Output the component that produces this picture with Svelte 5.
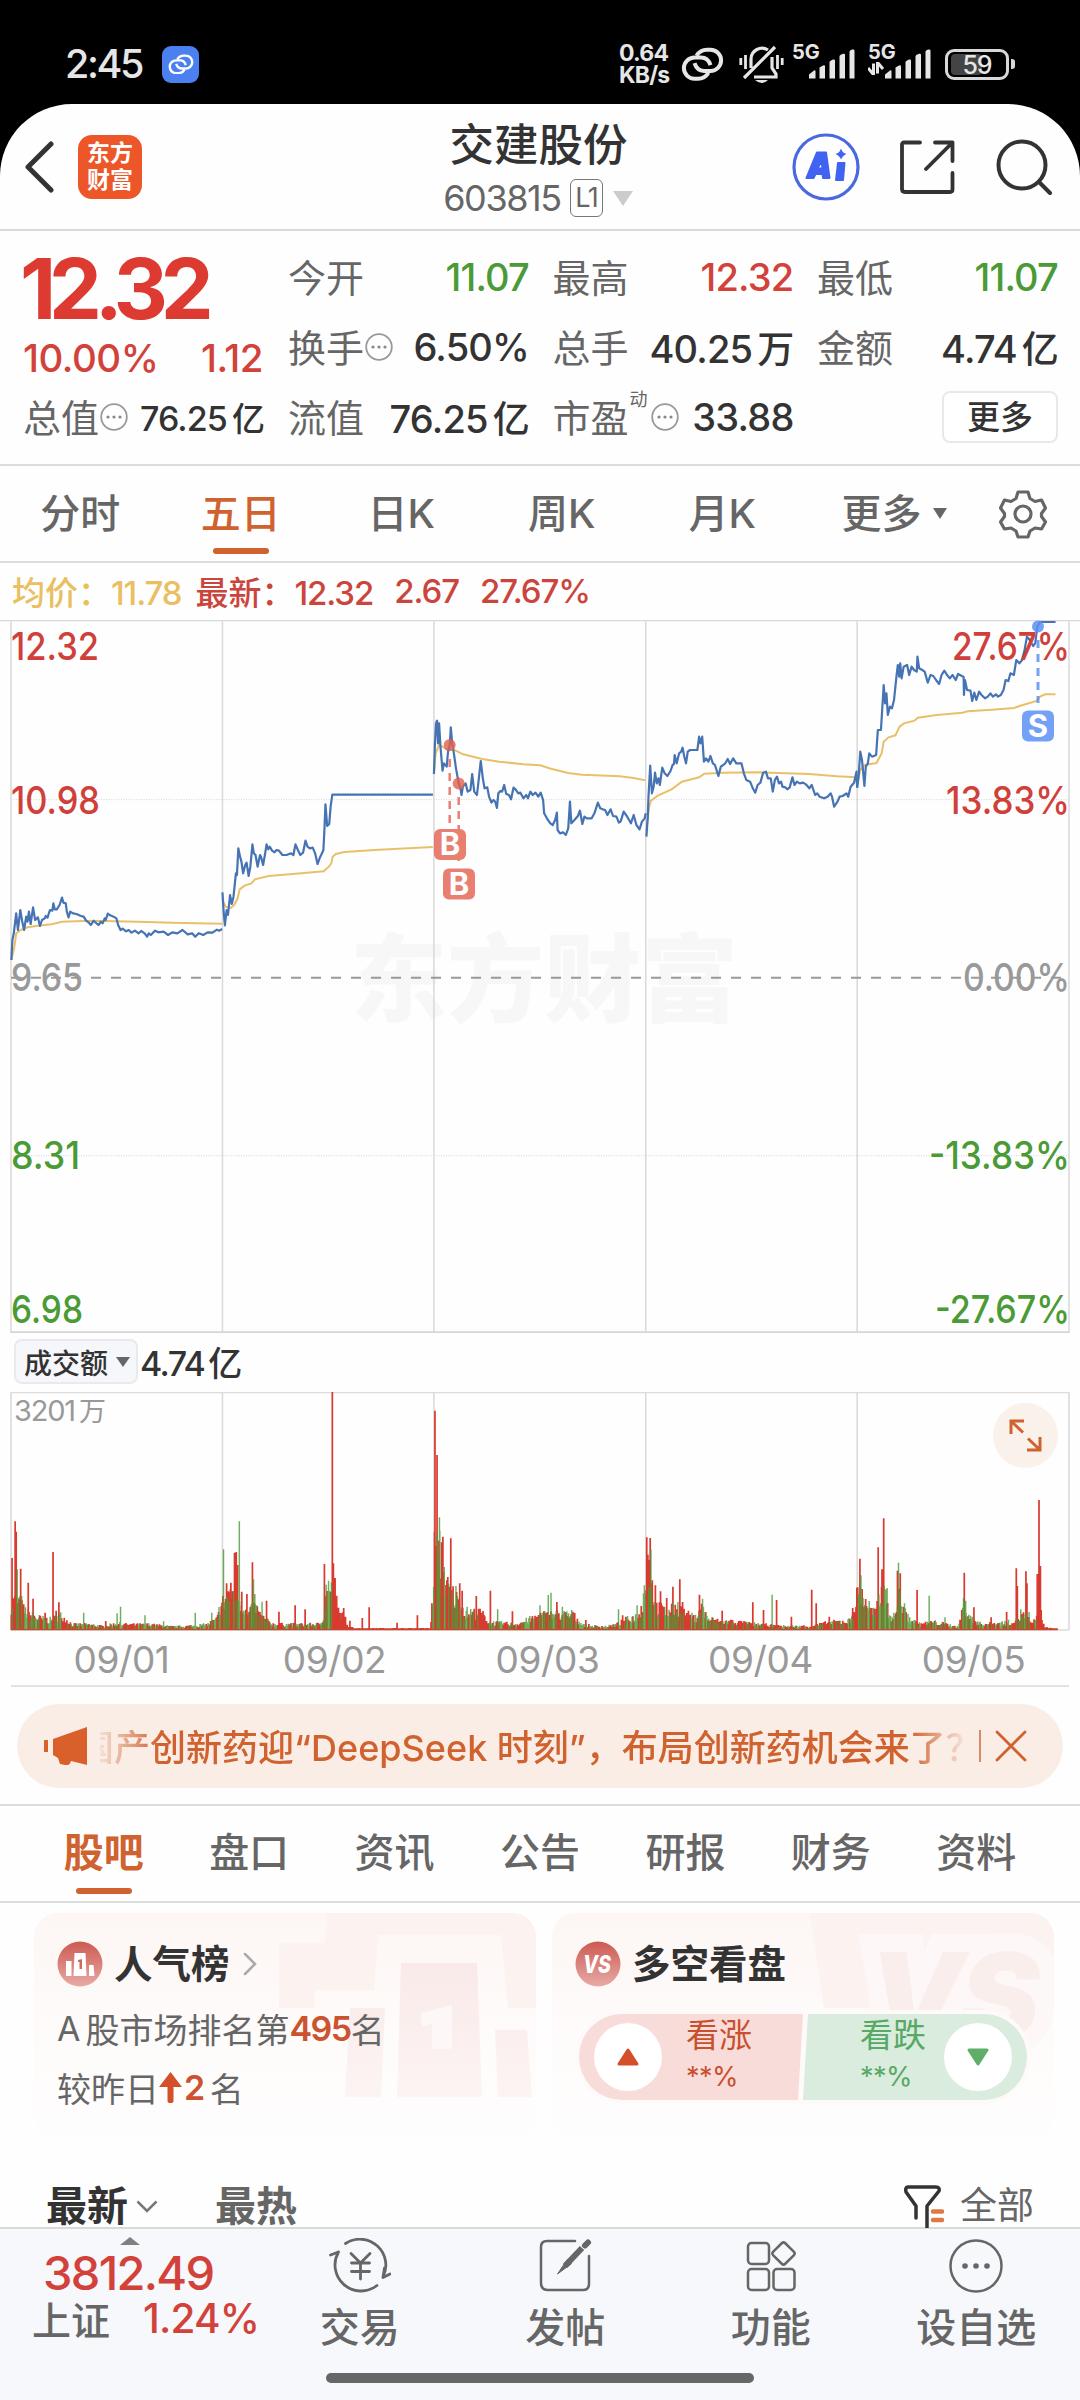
<script lang="ts">
	interface Quote {
		label: string;
		value: string;
		unit?: string;
		tone?: string;
		info?: boolean;
		sup?: string;
	}

	const quotes: Quote[] = [
		{ label: '今开', value: '11.07', tone: 'down' },
		{ label: '最高', value: '12.32', tone: 'up' },
		{ label: '最低', value: '11.07', tone: 'down' },
		{ label: '换手', value: '6.50%', info: true },
		{ label: '总手', value: '40.25', unit: '万' },
		{ label: '金额', value: '4.74', unit: '亿' },
		{ label: '流值', value: '76.25', unit: '亿' },
		{ label: '市盈', value: '33.88', info: true, sup: '动' }
	];

	const periods = ['分时', '五日', '日K', '周K', '月K'];
	const sections = ['股吧', '盘口', '资讯', '公告', '研报', '财务', '资料'];
	const dates = ['09/01', '09/02', '09/03', '09/04', '09/05'];

	// plot units: 3136 wide, day borders
	const days = [32, 646, 1260, 1875, 2489, 3104];

	const prices = [
		'33,1080 36,1020 40,1000 47,940 52,990 59,930 64,962 70,990 76,950 80,965 84,935 89,972 96,922 102,960 110,952 116,978 122,960 130,955 133,948 138,953 145,930 152,932 155,910 159,928 165,928 173,915 180,893 184,908 191,910 194,935 199,952 204,935 212,940 222,942 235,948 243,950 250,962 258,968 264,975 272,962 280,970 286,975 293,965 298,970 304,955 307,960 313,941 320,946 330,950 338,955 343,975 350,990 356,986 366,994 374,990 382,998 392,992 402,1000 410,993 420,1000 427,1010 432,1000 438,1005 450,992 460,997 475,995 488,1005 500,997 515,1000 530,990 545,1003 558,1000 567,1010 577,1000 590,1005 603,997 617,998 630,989 637,992 645,987',
		'646,877 649,930 653,976 658,930 662,945 668,885 673,912 678,890 682,850 685,820 688,825 692,745 697,770 701,785 706,820 712,795 716,788 722,828 727,800 733,733 737,760 742,765 748,800 755,765 758,770 764,795 770,760 774,733 779,748 783,740 790,752 797,757 803,750 810,752 820,765 832,765 845,760 852,765 858,733 865,750 872,765 880,758 887,722 893,740 900,745 908,743 915,760 922,792 928,775 935,760 939,750 942,690 945,613 950,678 956,672 960,620 965,584 1257,584',
		'1260,522 1263,430 1266,370 1269,362 1272,430 1275,370 1279,440 1285,512 1289,490 1297,500 1301,455 1306,435 1309,382 1313,430 1318,460 1324,505 1332,550 1338,570 1340,585 1344,560 1352,550 1358,575 1366,570 1371,522 1377,575 1385,585 1391,530 1396,483 1402,535 1407,565 1415,562 1420,590 1427,608 1433,600 1438,605 1443,624 1447,580 1453,573 1458,575 1464,555 1470,582 1478,585 1484,598 1491,563 1497,568 1505,580 1511,578 1520,595 1528,585 1533,595 1540,575 1547,585 1555,578 1563,590 1570,578 1577,600 1580,640 1588,655 1598,670 1605,675 1612,660 1617,638 1619,690 1626,700 1635,697 1643,705 1650,685 1655,605 1659,670 1668,660 1678,648 1684,632 1691,672 1697,650 1704,655 1718,655 1726,640 1736,608 1743,625 1750,628 1757,630 1764,645 1773,628 1780,648 1790,650 1797,668 1802,665 1811,635 1820,648 1832,670 1840,645 1848,675 1857,688 1864,665 1872,655 1875,640',
		'1877,710 1881,650 1883,590 1888,497 1893,580 1898,560 1902,518 1907,550 1912,535 1916,555 1923,503 1930,520 1938,528 1947,513 1953,495 1957,492 1959,465 1965,490 1972,460 1978,455 1982,443 1987,470 1992,490 1997,455 2004,450 2025,450 2030,410 2034,430 2039,410 2044,485 2050,475 2057,485 2063,468 2070,490 2076,495 2086,528 2093,500 2100,495 2106,490 2113,477 2120,492 2129,475 2138,490 2153,490 2160,520 2167,540 2178,545 2186,565 2193,578 2200,555 2208,548 2216,518 2224,515 2230,535 2238,535 2244,575 2250,540 2256,530 2262,550 2268,545 2272,560 2280,562 2286,568 2293,562 2301,532 2307,555 2314,545 2322,550 2332,548 2340,553 2350,565 2357,555 2367,585 2373,580 2380,590 2393,595 2403,590 2412,580 2416,590 2422,620 2432,605 2438,590 2447,588 2458,580 2463,590 2470,560 2480,548 2487,515 2489,563',
		'2489,563 2493,530 2498,455 2503,480 2510,558 2514,500 2520,490 2524,460 2532,470 2544,465 2549,390 2558,390 2561,340 2566,255 2570,310 2574,280 2578,345 2584,320 2590,325 2596,300 2603,230 2607,195 2611,230 2614,190 2618,235 2624,200 2634,195 2640,225 2647,200 2654,210 2662,215 2664,170 2669,205 2678,210 2685,215 2694,248 2702,225 2710,228 2718,240 2727,252 2734,225 2742,212 2750,225 2758,235 2766,225 2775,240 2782,222 2793,228 2798,230 2799,285 2802,240 2808,270 2818,272 2823,303 2829,278 2835,300 2843,275 2850,285 2860,295 2868,290 2876,280 2883,290 2892,283 2898,290 2906,285 2914,270 2920,240 2928,243 2934,220 2944,225 2951,180 2960,190 2968,180 2975,150 2982,110 2990,120 3000,138 3006,130 3012,80 3020,66 3065,66'
	];

	const averages = [
		'33,1080 42,1040 47,1000 60,990 80,982 110,977 150,973 180,965 240,963 300,963 400,965 500,968 645,971',
		'646,900 655,920 670,924 680,915 690,895 696,868 710,857 730,850 740,838 780,828 850,822 940,814 955,800 962,790 966,770 975,762 1000,756 1100,749 1257,741',
		'1260,520 1265,460 1275,435 1285,440 1300,450 1320,450 1345,463 1400,477 1450,485 1520,493 1568,496 1600,506 1650,519 1690,524 1800,529 1840,534 1873,541',
		'1877,690 1885,620 1890,602 1910,587 1950,568 1980,545 2030,532 2045,521 2100,518 2200,517 2350,522 2430,529 2487,532',
		'2490,550 2498,510 2510,495 2545,489 2560,460 2566,425 2580,412 2600,406 2612,380 2625,370 2655,362 2665,353 2720,345 2795,338 2810,334 2880,329 2945,324 2960,318 2980,312 3010,303 3020,290 3035,283 3065,283'
	];

	// turnover envelope: [x, height]
	const envelope = [
		[32, 100], [50, 120], [70, 75], [90, 55], [120, 42], [150, 38], [175, 55], [190, 42], [210, 20], [260, 20], [300, 14], [340, 24],
		[370, 20], [440, 20], [500, 12], [560, 16], [600, 20], [630, 40], [645, 100], [660, 130], [680, 150], [700, 110], [720, 60],
		[740, 90], [760, 50], [790, 22], [850, 20], [930, 22], [940, 60], [950, 140], [965, 150], [975, 120], [985, 60], [1000, 50],
		[1010, 18], [1030, 6], [1250, 6], [1256, 120], [1262, 300], [1280, 290], [1300, 160], [1330, 110], [1350, 70], [1400, 60],
		[1420, 28], [1500, 22], [1568, 55], [1620, 60], [1665, 55], [1690, 22], [1720, 14], [1760, 14], [1790, 20], [1820, 40],
		[1860, 55], [1870, 150], [1880, 260], [1893, 180], [1905, 90], [1940, 65], [1965, 95], [1990, 60], [2020, 45], [2035, 90],
		[2058, 42], [2090, 32], [2130, 32], [2168, 25], [2250, 16], [2290, 14], [2350, 14], [2410, 28], [2468, 35], [2483, 90],
		[2493, 160], [2510, 120], [2528, 80], [2543, 60], [2553, 120], [2568, 150], [2580, 60], [2598, 50], [2613, 140], [2630, 60],
		[2650, 34], [2670, 22], [2710, 30], [2748, 22], [2783, 10], [2798, 100], [2820, 42], [2850, 22], [2880, 24], [2920, 28],
		[2950, 34], [2970, 60], [2998, 25], [3008, 40], [3014, 150], [3023, 60], [3033, 10], [3068, 5], [3080, 0]
	];

	// turnover peaks: [x, height, r|g]
	const peaks: [number, number, string][] = [
		[35, 216, 'r'], [44, 326, 'r'], [47, 295, 'r'], [50, 182, 'g'], [60, 184, 'r'], [63, 102, 'g'], [82, 142, 'r'], [96, 94, 'r'],
		[131, 52, 'r'], [154, 234, 'r'], [163, 58, 'r'], [171, 83, 'r'], [243, 52, 'g'], [307, 27, 'r'], [340, 50, 'g'], [350, 70, 'g'],
		[421, 44, 'g'], [475, 26, 'g'], [567, 52, 'g'], [615, 52, 'g'], [636, 69, 'g'], [649, 242, 'g'], [658, 140, 'r'], [669, 122, 'r'],
		[681, 232, 'r'], [686, 234, 'r'], [690, 195, 'r'], [695, 326, 'g'], [702, 115, 'r'], [717, 108, 'r'], [733, 203, 'r'], [736, 152, 'g'],
		[740, 108, 'g'], [761, 85, 'g'], [774, 88, 'r'], [810, 55, 'r'], [857, 74, 'r'], [886, 62, 'r'], [942, 198, 'r'], [947, 136, 'g'],
		[954, 148, 'g'], [965, 714, 'r'], [968, 200, 'r'], [973, 156, 'r'], [998, 66, 'r'], [1016, 28, 'r'], [1052, 36, 'r'], [1072, 68, 'r'],
		[1153, 22, 'r'], [1212, 44, 'r'], [1263, 658, 'r'], [1269, 525, 'r'], [1276, 338, 'g'], [1286, 280, 'r'], [1309, 275, 'r'],
		[1324, 132, 'g'], [1335, 140, 'r'], [1342, 118, 'r'], [1383, 102, 'r'], [1394, 64, 'r'], [1424, 118, 'r'], [1445, 62, 'g'],
		[1488, 56, 'r'], [1568, 74, 'g'], [1592, 105, 'g'], [1600, 112, 'g'], [1617, 84, 'r'], [1633, 70, 'g'], [1660, 60, 'g'],
		[1701, 30, 'r'], [1796, 62, 'g'], [1808, 44, 'r'], [1850, 74, 'g'], [1862, 72, 'r'], [1878, 278, 'r'], [1884, 210, 'r'],
		[1888, 276, 'r'], [1890, 242, 'g'], [1903, 134, 'r'], [1918, 116, 'r'], [1936, 96, 'r'], [1954, 130, 'r'], [1974, 152, 'r'],
		[1982, 84, 'r'], [2031, 106, 'r'], [2040, 94, 'g'], [2097, 58, 'r'], [2186, 83, 'r'], [2217, 60, 'r'], [2242, 106, 'g'],
		[2255, 90, 'r'], [2298, 40, 'r'], [2357, 121, 'r'], [2370, 80, 'r'], [2408, 40, 'r'], [2476, 66, 'r'], [2497, 214, 'r'],
		[2500, 164, 'g'], [2550, 248, 'r'], [2561, 182, 'r'], [2566, 335, 'r'], [2572, 122, 'g'], [2576, 126, 'g'], [2606, 178, 'r'],
		[2609, 202, 'g'], [2614, 170, 'r'], [2663, 120, 'r'], [2698, 103, 'g'], [2744, 38, 'g'], [2800, 172, 'r'], [2804, 88, 'g'],
		[2828, 68, 'r'], [2878, 38, 'r'], [2923, 54, 'r'], [2951, 185, 'r'], [2954, 132, 'r'], [2964, 62, 'g'], [2979, 176, 'r'],
		[2982, 140, 'r'], [2988, 54, 'g'], [3012, 168, 'r'], [3017, 390, 'r'], [3021, 192, 'r']
	];

	function envelopeAt(x: number) {
		let i = 1;
		while (i < envelope.length - 1 && envelope[i][0] < x) i++;
		const [x0, h0] = envelope[i - 1];
		const [x1, h1] = envelope[i];
		return h0 + ((h1 - h0) * (x - x0)) / (x1 - x0);
	}

	function buildBars() {
		const paths: Record<string, string> = { r: '', g: '' };
		let seed = 7;
		for (let x = 33; x < 3070; x += 2.56) {
			seed = (seed * 16807) % 2147483647;
			const rnd = seed / 2147483647;
			seed = (seed * 16807) % 2147483647;
			const limitUp = x > 965 && x < 1256;
			const color = limitUp || x > 3010 || seed / 2147483647 > 0.45 ? 'r' : 'g';
			const h = Math.max(5, envelopeAt(x) * (0.45 + 0.6 * rnd));
			paths[color] += `M${x.toFixed(1)} 930v${-h.toFixed(0)}`;
		}
		for (const [x, h, color] of peaks) {
			paths[color] += `M${x} 930v${-h}`;
		}
		return paths;
	}

	const bars = buildBars();

	const axis = [
		{ y: 40, left: '12.32', right: '27.67%', lw: 88, rw: 118, tone: 'up' },
		{ y: 194, left: '10.98', right: '13.83%', lw: 89, rw: 124, tone: 'up' },
		{ y: 371, left: '9.65', right: '0.00%', lw: 72, rw: 107, tone: 'flat' },
		{ y: 549, left: '8.31', right: '-13.83%', lw: 69, rw: 141, tone: 'down' },
		{ y: 703, left: '6.98', right: '-27.67%', lw: 72, rw: 135, tone: 'down' }
	];
</script>

{#snippet info()}
	<svg class="info" width="28" height="28" viewBox="0 0 28 28">
		<circle cx="14" cy="14" r="12.8" fill="none" stroke="#999" stroke-width="1.8" />
		<g fill="#888"><circle cx="8" cy="14" r="1.6" /><circle cx="14" cy="14" r="1.6" /><circle cx="20" cy="14" r="1.6" /></g>
	</svg>
{/snippet}

{#snippet link(color: string, size: number)}
	<svg width={size} height={size * 0.8} viewBox="0 0 43 34" fill="none" stroke={color} stroke-width="4">
		<path d="M15.500 8.500C18 4.500 21 2.500 26 2.500H29.500A10.600 10.600 0 0 1 29.500 23.700H23Q16 23.700 13.500 16" />
		<path d="M27.500 25.500C25 29.500 22 31.500 17 31.500H13.500A10.600 10.600 0 0 1 13.500 10.300H20Q27 10.300 29.500 18" />
	</svg>
{/snippet}

{#snippet signal()}
	<svg width="46" height="30" viewBox="0 0 46 30" fill="#e6e6e6">
		<path d="M0 29.5v-4l5-4q1.500-1 1.500 1v7zM10.500 29.500V18.500l3.500-2q2-1 2 1v12zM20.500 29.500V13q0-1 3.500-2.500q2-.5 2 1v18zM30.500 29.500V7q0-1 3.500-2.200q2-.5 2 1v23.700zM40.500 29.500V2.500q0-1 2.500-2q2.500-.5 2.500 1v28z" />
	</svg>
{/snippet}

<div class="phone">
	<div class="status">
		<span class="clock">2:45</span>
		<span class="link-badge">{@render link('#fff', 26)}</span>
		<div class="status-right">
			<span class="speed">0.64<br />KB/s</span>
			{@render link('#e6e6e6', 43)}
			<svg class="bell" width="45" height="39" viewBox="0 0 45 39" fill="none" stroke="#e6e6e6" stroke-width="3.200">
				<path d="M12 23V14a11 11 0 0 1 17-9M33 12v11l4 6v3H15M5 33L36 2" />
				<path d="M1.800 13v7M6.500 10v14M38.500 10v14M43.200 13v7" stroke-width="2.800" />
				<path d="M16 35h13q-6 6-13 0z" fill="#e6e6e6" stroke="none" />
			</svg>
			<span class="net">5G</span>
			{@render signal()}
			<span class="net second">5G<svg width="17" height="13" viewBox="0 0 17 13"><path d="M5.500 13V1.500M0 6l5 6M9.500 0v11.500M10 1l5 6" stroke="#e6e6e6" stroke-width="3" fill="none" /></svg></span>
			{@render signal()}
			<div class="battery"><i></i><span>59</span></div>
		</div>
	</div>

	<div class="sheet">
		<header class="header">
			<svg class="back" width="32" height="52" viewBox="0 0 32 52"><path d="M27 3L4 26L27 49" fill="none" stroke="#333" stroke-width="5" stroke-linecap="round" stroke-linejoin="round" /></svg>
			<div class="logo">东方<br />财富</div>
			<div class="title">
				<h1>交建股份</h1>
				<div class="code">603815<span>L1</span><svg width="22" height="15" viewBox="0 0 22 15"><path d="M1 0h20L11 15z" fill="#ccc" /></svg></div>
			</div>
			<svg class="ai" width="68" height="68" viewBox="0 0 68 68">
				<circle cx="34" cy="34" r="32" fill="none" stroke="#4a68e0" stroke-width="3.200" />
				<g fill="#4163f2" stroke="#4163f2" stroke-width="2" stroke-linejoin="round">
					<path d="M25 19.500H34L37.500 45H31L30.500 41H23.500L21.500 45H14.500zM29.500 28L25.500 35.500H30.500z" fill-rule="evenodd" />
					<path d="M46 30H52.500L51 47H44z" />
				</g>
				<path d="M49 15.500q1.500 4.500 5.500 5.500q-4 1.500-5.500 5.500q-1.500-4-5.500-5.500q4-1 5.500-5.500z" fill="#4163f2" />
			</svg>
			<svg class="share" width="56" height="56" viewBox="0 0 56 56" fill="none" stroke="#333" stroke-width="3.800" stroke-linecap="round" stroke-linejoin="round">
				<path d="M21 3.500H5q-2 0-2 2V50q0 3 3 3H51q2.500 0 2.500-2.500V34M36 3.500H53.500V22M53.500 3.500L27 30" />
			</svg>
			<svg width="56" height="56" viewBox="0 0 56 56" fill="none" stroke="#333" stroke-width="4" stroke-linecap="round">
				<circle cx="26" cy="26" r="23.500" /><path d="M43 43L54 54" />
			</svg>
		</header>

		<section class="quote">
			<div class="main-quote">
				<div class="price">12.32</div>
				<div class="change"><span>10.00%</span><span>1.12</span></div>
				<div class="cell small"><span class="label">总值</span>{@render info()}<span class="value">76.25<em>亿</em></span></div>
			</div>
			<div class="grid">
				{#each quotes as q}
					<div class="cell">
						<span class="label">{q.label}</span>
						{#if q.sup}<sup>{q.sup}</sup>{/if}
						{#if q.info}{@render info()}{/if}
						<span class="value {q.tone ?? ''}">{q.value}{#if q.unit}<em>{q.unit}</em>{/if}</span>
					</div>
				{/each}
				<div class="cell"><button class="more">更多</button></div>
			</div>
		</section>

		<nav class="periods">
			{#each periods as p}
				<span class="period" class:active={p === '五日'}>{p}</span>
			{/each}
			<span class="period more-period">更多<svg width="14" height="11" viewBox="0 0 14 11"><path d="M0 0h14L7 11z" fill="#666" /></svg></span>
			<svg class="gear" width="48" height="50" viewBox="0 0 48 50" fill="none" stroke="#666" stroke-width="3.200" stroke-linejoin="round">
				<path d="M19 3h10l2 6.500l5 3l6.500-1.500l4 8l-4 5.500v3l4 5.500l-4 7l-6.500-1l-5 3l-2 6H19l-2-6l-5-3l-6.500 1l-4-7l4-5.500v-3l-4-5.500l4-8l6.500 1.500l5-3z" />
				<circle cx="24" cy="25" r="8" />
			</svg>
		</nav>

		<div class="legend">
			<span class="avg">均价：<b>11.78</b></span>
			<span>最新：<b>12.32</b></span>
			<b>2.67</b>
			<b>27.67%</b>
		</div>

		<svg class="price-chart" width="1080" height="713" viewBox="0 0 1080 713">
			<text class="watermark" x="350" y="394" textLength="388" lengthAdjust="spacingAndGlyphs">东方财富</text>
			<svg width="1080" height="713" viewBox="0 60 3136 2139" preserveAspectRatio="none">
				<g class="fixed" fill="none">
					{#each days as x}
						<path d="M{x} 64V2199" stroke="#d9d9d9" stroke-width="1.500" />
					{/each}
					<path d="M0 61.500H3136" stroke="#d8d8d8" stroke-width="1.500" />
					<path d="M32 2197H3104" stroke="#d5d5d5" stroke-width="2" />
					<path d="M32 599H3104M32 1667H3104" stroke="#d5d5d5" stroke-width="1" stroke-dasharray="1 1.500" />
					<path d="M32 1133H3104" stroke="#999" stroke-width="2" stroke-dasharray="10 10" />
					{#each averages as points}
						<polyline {points} stroke="#e9c06a" stroke-width="2" />
					{/each}
					{#each prices as points}
						<polyline {points} stroke="#4573b4" stroke-width="2.200" stroke-linejoin="round" />
					{/each}
				</g>
			</svg>
			{#each axis as a}
				<text class="axis {a.tone}" x="11" y={a.y} textLength={a.lw} lengthAdjust="spacingAndGlyphs">{a.left}</text>
				<text class="axis {a.tone}" x="1070" y={a.y} text-anchor="end" textLength={a.rw} lengthAdjust="spacingAndGlyphs">{a.right}</text>
			{/each}
			<g class="buy">
				<circle cx="449.700" cy="125" r="6" /><circle cx="458.700" cy="163.500" r="6" />
				<path d="M449.700 139V203M458.700 177V241" stroke-width="2.500" stroke-dasharray="8 6" />
				<rect x="434" y="209" width="32" height="31" rx="6" /><rect x="443" y="248.500" width="32" height="31" rx="6" />
			</g>
			<text class="tag" x="450" y="235">B</text>
			<text class="tag" x="459" y="274.500">B</text>
			<g class="sell">
				<circle cx="1038" cy="6.500" r="6" />
				<path d="M1038 20V83" stroke-width="3" stroke-dasharray="8 6" />
				<rect x="1022" y="90.500" width="32" height="31" rx="6" />
			</g>
			<text class="tag" x="1038" y="117">S</text>
		</svg>

		<div class="volume-head">
			<span class="chip">成交额<svg width="14" height="10" viewBox="0 0 14 10"><path d="M0 0h14L7 10z" fill="#666" /></svg></span>
			<span>4.74<em>亿</em></span>
		</div>

		<div class="volume">
			<svg width="1080" height="239" viewBox="0 216 3136 717" preserveAspectRatio="none">
				<g class="fixed" fill="none">
					{#each days as x}
						<path d="M{x} 217V930" stroke="#d9d9d9" stroke-width="1.500" />
					{/each}
					<path d="M32 217.500H3104M32 930H3104" stroke="#dcdcdc" stroke-width="1.500" />
				</g>
				<path d={bars.r} stroke="#d93a2f" stroke-width="5" />
				<path d={bars.g} stroke="#4a9a35" stroke-width="4.200" stroke-opacity=".8" />
				<path d="M32 929H3070" stroke="#c9452e" stroke-width="4" />
			</svg>
			<span class="volume-max">3201<em>万</em></span>
			<div class="expand">
				<svg width="33" height="33" viewBox="0 0 33 33" fill="none" stroke="#d0622f" stroke-width="3"><path d="M15 2H2V15M2.500 2.500L14 13.500M18 31H31V18M30.500 30.500L19 19.500" /></svg>
			</div>
		</div>

		<div class="dates">
			{#each dates as d}<span>{d}</span>{/each}
		</div>

		<div class="notice">
			<svg width="43" height="38" viewBox="0 0 43 38" fill="#d9602b"><path d="M0 13h4v12H0zM9 12L43 0V38L27 34q-1 5-6 4l-5-1l-2-6L9 28z" /></svg>
			<div class="ticker"><span>国产创新药迎“DeepSeek 时刻”，布局创新药机会来了？</span></div>
			<i></i>
			<svg width="32" height="32" viewBox="0 0 32 32"><path d="M2 2L30 30M30 2L2 30" stroke="#d0622f" stroke-width="2.800" stroke-linecap="round" /></svg>
		</div>

		<nav class="sections">
			{#each sections as s}
				<span class="section" class:active={s === '股吧'}>{s}</span>
			{/each}
		</nav>

		<div class="cards">
			<div class="card">
				<svg class="art" width="502" height="225" viewBox="0 0 502 225">
					<path d="M293 0H502V95H474L467 22H344L340 77H281V95H245V30H291z" fill="#fcf2f0" />
					<g fill="url(#podium)">
						<path d="M367 50H443L448 184H363zM316 95H351L347 184H311zM461 117H493L498 184H464z" />
						<path d="M387 100L418 92V136H398V111L388 113z" fill="#fdf8f7" />
					</g>
				</svg>
				<div class="card-title">
					<svg width="46" height="46" viewBox="0 0 46 46">
						<defs>
							<linearGradient id="badge" x2="0" y2="1"><stop stop-color="#cc5a52" /><stop offset="1" stop-color="#e8aaa6" /></linearGradient>
							<linearGradient id="podium" x2="0" y2="1"><stop stop-color="#f9eae9" /><stop offset="1" stop-color="#fcf4f3" /></linearGradient>
						</defs>
						<circle cx="23" cy="23" r="22.500" fill="url(#badge)" />
						<path d="M9 35V20h5.500V35zM16.500 35L17.500 12H28.500L29.500 35zM32 35V24H36.500L37.500 35z" fill="#fff" />
						<path d="M21 19l4-1V28H22.500V21H21z" fill="#cf6a63" />
					</svg>
					<h2>人气榜</h2>
					<svg class="chev" width="14" height="24" viewBox="0 0 14 24"><path d="M2 2L12 12L2 22" fill="none" stroke="#aaa" stroke-width="2.500" stroke-linecap="round" /></svg>
				</div>
				<p class="rank"><span class="a">A</span>股市场排名第<b>495</b>名</p>
				<p class="delta">较昨日<svg width="23" height="31" viewBox="0 0 23 31"><path d="M11.500 0L23 15H14.500V29q0 2-3 2t-3-2V15H0z" fill="#d3502b" /></svg><b>2</b>名</p>
			</div>
			<div class="card">
				<svg class="art" width="502" height="225" viewBox="0 0 502 225">
					<path d="M258 0H502V95H272z" fill="#fcf2f0" />
					<text x="316" y="126" class="vs-art outline">VS</text>
					<text x="316" y="126" class="vs-art">VS</text>
				</svg>
				<div class="card-title">
					<svg width="46" height="46" viewBox="0 0 46 46">
						<circle cx="23" cy="23" r="22.500" fill="url(#badge)" />
						<text x="22" y="32" text-anchor="middle" class="vs" textLength="28" lengthAdjust="spacingAndGlyphs">VS</text>
					</svg>
					<h2>多空看盘</h2>
				</div>
				<div class="vote">
					<div class="bull">
						<i><svg width="22" height="18" viewBox="0 0 22 18"><path d="M11 2L20 16H2z" fill="#d3502b" stroke="#d3502b" stroke-width="3" stroke-linejoin="round" /></svg></i>
						<span>看涨<small>**%</small></span>
					</div>
					<div class="bear">
						<span>看跌<small>**%</small></span>
						<i><svg width="22" height="18" viewBox="0 0 22 18"><path d="M11 16L20 2H2z" fill="#5fae6a" stroke="#5fae6a" stroke-width="3" stroke-linejoin="round" /></svg></i>
					</div>
				</div>
			</div>
		</div>

		<div class="sorting">
			<strong>最新</strong>
			<svg width="22" height="13" viewBox="0 0 22 13"><path d="M1.500 1.500L11 11L20.500 1.500" fill="none" stroke="#777" stroke-width="2.500" /></svg>
			<strong class="hot">最热</strong>
			<svg class="filter" width="40" height="43" viewBox="0 0 40 43" fill="none">
				<path d="M12 33V21L2 7Q1 2 4 2H32Q36 2 35 6L23 21V42" stroke="#333" stroke-width="3.500" stroke-linecap="round" stroke-linejoin="round" />
				<path d="M29 26.500H38M29 35H38" stroke="#e07a45" stroke-width="4.500" stroke-linecap="round" />
			</svg>
			<span>全部</span>
		</div>

		<footer class="bottom">
			<div class="index">
				<svg width="20" height="8" viewBox="0 0 20 8"><path d="M10 0L20 8H0z" fill="#808080" /></svg>
				<b class="points">3812.49</b>
				<div><span>上证</span><b>1.24%</b></div>
			</div>
			<div class="action">
				<svg width="62" height="56" viewBox="0 0 62 56" fill="none" stroke="#666" stroke-width="2.800" stroke-linecap="round">
					<path d="M16.500 5.500A26 26 0 0 1 54 39M54 39.500L61 36M48 47.500A26 26 0 0 1 9.500 14M9.500 14L1.500 17M54 39L55.500 30" />
					<path d="M22 15.500L31.500 25L41 15.500M22.500 25H40.500M22.500 33.500H40.500M31.500 25V41" />
				</svg>
				<span>交易</span>
			</div>
			<div class="action">
				<svg width="54" height="56" viewBox="0 0 54 56" fill="none" stroke="#666" stroke-width="2.500" stroke-linecap="round">
					<path d="M37 3H9Q3 3 3 9V45Q3 52 10 52H45Q51 52 51 46V18" />
					<path d="M44 10L27 28" stroke-width="6" stroke-linecap="butt" /><path d="M29 22L19.500 36L33 26z" fill="#666" stroke-width="1" />
					<path d="M47 7.500L50 4.500" stroke-width="6" />
				</svg>
				<span>发帖</span>
			</div>
			<div class="action">
				<svg width="50" height="56" viewBox="0 0 50 56" fill="none" stroke="#666" stroke-width="2.500">
					<rect x="2" y="5" width="21" height="21" rx="3.500" /><rect x="2" y="31" width="21" height="21" rx="3.500" /><rect x="27.500" y="31" width="21" height="21" rx="3.500" />
					<rect x="29" y="7" width="17" height="17" rx="2.500" transform="rotate(45 37.500 15.500)" />
				</svg>
				<span>功能</span>
			</div>
			<div class="action">
				<svg width="54" height="56" viewBox="0 0 54 56">
					<circle cx="27" cy="28" r="25.500" fill="none" stroke="#666" stroke-width="2.500" />
					<g fill="#666"><circle cx="16" cy="28" r="2.800" /><circle cx="27" cy="28" r="2.800" /><circle cx="38" cy="28" r="2.800" /></g>
				</svg>
				<span>设自选</span>
			</div>
			<div class="home-bar"></div>
		</footer>
	</div>
</div>

<style>
	:global(body) {
		background: #000;
	}

	.phone {
		width: 1080px;
		height: 2400px;
		overflow: hidden;
		background: #000;
		color: #333;
		font-family: Inter, 'Noto Sans CJK SC', sans-serif;
		font-weight: 500;
		white-space: nowrap;
	}

	.phone * {
		box-sizing: border-box;
	}

	svg {
		display: block;
		flex: none;
	}

	h1, h2, p {
		margin: 0;
	}

	em {
		margin-left: 5px;
		font-style: normal;
	}

	.up { color: #d2423a; fill: #d0403a; }
	.down { color: #4a9a35; fill: #4a9a35; }
	.flat { fill: #999; }

	.status {
		height: 104px;
		padding: 24px 71px 0 65px;
		display: flex;
		align-items: center;
		color: #e6e6e6;
	}

	.clock {
		width: 97px;
		font-size: 39.500px;
		letter-spacing: -2.4px;
	}

	.link-badge {
		width: 37px;
		height: 37px;
		border-radius: 9px;
		background: #4a80f0;
		display: flex;
		align-items: center;
		justify-content: center;
	}

	.status-right {
		margin-left: auto;
		display: flex;
		align-items: center;
	}

	.speed {
		width: 62px;
		font-size: 23px;
		font-weight: 700;
		line-height: 22px;
		letter-spacing: -0.8px;
	}

	.bell {
		margin: 0 8px 0 15px;
	}

	.net {
		align-self: flex-start;
		width: 30px;
		margin-right: -13px;
		font-size: 20px;
		font-weight: 700;
		line-height: 20px;
	}

	.net.second {
		margin-left: 13px;
		width: 28px;
		margin-right: -11px;
	}

	.battery {
		position: relative;
		width: 64px;
		height: 31px;
		margin-left: 14px;
		border: 3px solid #d8d8d8;
		border-radius: 9px;
		text-align: center;
		font-size: 25px;
		line-height: 26px;
		letter-spacing: -1px;
	}

	.battery i {
		position: absolute;
		left: 3px;
		top: 2px;
		width: 31px;
		height: 21px;
		border-radius: 4px;
		background: #444;
	}

	.battery span {
		position: relative;
	}

	.battery::after {
		content: '';
		position: absolute;
		right: -9px;
		top: 7px;
		width: 4px;
		height: 10px;
		border-radius: 0 3px 3px 0;
		background: #d8d8d8;
	}

	.sheet {
		height: 2296px;
		background: #fefefe;
		border-radius: 72px 72px 0 0;
		overflow: hidden;
	}

	.header {
		height: 127px;
		padding: 0 28px 0 24px;
		display: flex;
		align-items: center;
		border-bottom: 2px solid #d9d9d9;
	}

	.logo {
		width: 64px;
		height: 64px;
		margin-left: 22px;
		padding-top: 5px;
		border-radius: 14px;
		background: #ec5628;
		color: #fff;
		font-size: 23px;
		font-weight: 700;
		line-height: 27px;
		text-align: center;
	}

	.title {
		flex: 1;
		padding: 7px 0 0 251px;
		text-align: center;
	}

	.title h1 {
		font-size: 44.500px;
		font-weight: 500;
		line-height: 56px;
	}

	.code {
		display: flex;
		align-items: center;
		justify-content: center;
		font-size: 36px;
		font-weight: 400;
		line-height: 50px;
		letter-spacing: -1.4px;
		color: #666;
	}

	.code span {
		width: 33px;
		height: 38px;
		margin: 0 9px;
		border: 1.5px solid #777;
		border-radius: 6px;
		font-size: 27px;
		line-height: 35px;
	}

	.ai {
		margin-left: 108px;
	}

	.share {
		margin: 0 41px 0 39px;
	}

	.quote {
		height: 235px;
		padding: 11px 23px 0;
		display: flex;
		gap: 25px;
		border-bottom: 2px solid #dcdcdc;
	}

	.main-quote {
		width: 240px;
	}

	.price {
		height: 93px;
		margin-left: -3px;
		color: #dd3b31;
		font-size: 84px;
		font-weight: 700;
		line-height: 93px;
		letter-spacing: -7.2px;
	}

	.change {
		height: 47px;
		display: flex;
		justify-content: space-between;
		color: #d2423a;
		font-size: 38.500px;
		line-height: 47px;
		letter-spacing: -0.5px;
	}

	.grid {
		flex: 1;
		display: grid;
		grid-template-columns: repeat(3, 240px);
		grid-auto-rows: 70px;
		justify-content: space-between;
	}

	.cell {
		display: flex;
		align-items: center;
		height: 70px;
		font-size: 38px;
		letter-spacing: -0.8px;
	}

	.cell .label {
		padding-bottom: 4px;
		color: #666;
		font-size: 38px;
		font-weight: 400;
		letter-spacing: 0;
	}

	.cell .value {
		margin-left: auto;
		margin-right: -1px;
	}

	.cell em {
		font-size: 37px;
	}

	.cell.small {
		letter-spacing: -0.9px;
	}

	.cell.small .value {
		font-size: 34px;
	}

	.cell.small em {
		font-size: 33px;
	}

	.info {
		margin-left: 1px;
	}

	sup {
		width: 20px;
		margin: -38px 0 0 1px;
		font-size: 18px;
		font-weight: 400;
		color: #666;
		letter-spacing: 0;
	}

	.more {
		width: 116px;
		height: 52px;
		margin: 0 -1px 0 auto;
		padding: 0;
		border: 2px solid #e6e8ea;
		border-radius: 8px;
		background: #fff;
		color: #333;
		font: inherit;
		font-size: 33px;
		line-height: 46px;
	}

	.periods {
		height: 97px;
		display: flex;
		align-items: center;
		border-bottom: 2px solid #dcdcdc;
	}

	.period {
		position: relative;
		width: 160.500px;
		text-align: center;
		color: #666;
		font-size: 40px;
		line-height: 94px;
	}

	.period.active, .section.active {
		color: #d0622f;
	}

	.period.active::after, .section.active::after {
		content: '';
		position: absolute;
		left: calc(50% - 28px);
		bottom: 7px;
		width: 56px;
		height: 6px;
		border-radius: 3px;
		background: #d0622f;
	}

	.more-period {
		display: flex;
		align-items: center;
		justify-content: flex-end;
		gap: 11px;
		width: 144px;
	}

	.gear {
		margin-left: 52px;
	}

	.legend {
		height: 57px;
		padding: 0 0 2px 12px;
		display: flex;
		align-items: center;
		gap: 21px;
		color: #cb453d;
		font-size: 33px;
	}

	.legend b {
		font-weight: 500;
		letter-spacing: -1.1px;
	}

	.legend .avg {
		margin-right: -7px;
		color: #e9bf62;
	}

	.fixed path, .fixed polyline {
		vector-effect: non-scaling-stroke;
	}

	.watermark {
		fill: #f7f7f7;
		font-size: 96px;
		font-weight: 900;
	}

	.axis {
		font-size: 38.500px;
	}

	.tag {
		fill: #fff;
		font-size: 31px;
		font-weight: 700;
		text-anchor: middle;
	}

	.buy {
		fill: #e4604f;
		stroke: #e4604f;
		opacity: 0.8;
	}

	.sell {
		fill: #5b91f5;
		stroke: #5b91f5;
		opacity: 0.85;
	}

	.buy rect, .buy circle, .sell rect, .sell circle {
		stroke: none;
	}

	.volume-head {
		height: 59px;
		padding: 0 0 2px 14px;
		display: flex;
		align-items: center;
		gap: 2px;
		font-size: 34px;
		letter-spacing: -1.6px;
	}

	.volume-head em {
		margin-left: 4px;
	}

	.chip {
		width: 124px;
		height: 45px;
		padding-left: 8px;
		display: flex;
		align-items: center;
		gap: 8px;
		border: 2px solid #e8eaee;
		border-radius: 8px;
		background: #f6f7fa;
		font-size: 28px;
		letter-spacing: 0;
	}

	.volume {
		position: relative;
		height: 239px;
	}

	.volume-max {
		position: absolute;
		left: 14px;
		top: 0;
		color: #999;
		font-size: 29px;
		font-weight: 400;
		letter-spacing: -1.2px;
		line-height: 38px;
	}

	.volume-max em {
		margin-left: 4px;
		font-size: 27px;
	}

	.expand {
		position: absolute;
		left: 993px;
		top: 11px;
		width: 65px;
		height: 65px;
		padding: 16px;
		border-radius: 50%;
		background: #fbf1eb;
	}

	.dates {
		height: 56px;
		margin: 0 11px;
		padding-left: 4px;
		display: flex;
		border-bottom: 2px solid #e3e3e3;
		color: #999;
		font-size: 37px;
		font-weight: 400;
		line-height: 57px;
		letter-spacing: -0.4px;
	}

	.dates span {
		flex: 0 0 213px;
		text-align: center;
	}

	.notice {
		height: 84px;
		margin: 17px 17px 16px;
		padding: 0 34px 0 27px;
		display: flex;
		align-items: center;
		border-radius: 42px;
		background: #faede5;
		color: #d0622f;
	}

	.ticker {
		width: 868px;
		margin-left: 13px;
		padding-bottom: 2px;
		overflow: hidden;
		font-size: 36px;
		mask-image: linear-gradient(90deg, rgba(0, 0, 0, 0.1), #000 60px, #000 810px, transparent 868px);
	}

	.ticker span {
		margin-left: -22px;
	}

	.notice i {
		width: 2px;
		height: 32px;
		margin: 0 14px 0 11px;
		background: #d88a65;
	}

	.sections {
		height: 99px;
		padding: 0 31px;
		display: flex;
		border-top: 2px solid #dcdcdc;
		border-bottom: 2px solid #dcdcdc;
	}

	.section {
		position: relative;
		flex: 1;
		text-align: center;
		color: #666;
		font-size: 40px;
		line-height: 94px;
	}

	.section.active {
		font-weight: 700;
	}

	.cards {
		height: 237px;
		padding: 10px 26px 0 34px;
		display: flex;
		gap: 16px;
	}

	.card {
		position: relative;
		width: 502px;
		height: 225px;
		padding: 28px 23px 26px;
		border-radius: 24px;
		background: linear-gradient(#fdf6f4, #fefcfb 60%, #fefdfd);
		overflow: hidden;
	}

	.art {
		position: absolute;
		left: 0;
		top: 0;
	}

	.card-title {
		position: relative;
		display: flex;
		align-items: center;
		height: 46px;
	}

	.card-title h2 {
		margin-left: 11px;
		font-size: 38.500px;
		font-weight: 700;
		line-height: 46px;
	}

	.chev {
		margin-left: 13px;
	}

	.rank, .delta {
		position: relative;
		display: flex;
		align-items: center;
		height: 59px;
		color: #666;
		font-size: 34px;
		font-weight: 400;
	}

	.rank {
		margin-top: 12px;
	}

	.rank .a {
		margin-right: 5px;
	}

	.rank b, .delta b {
		color: #cb5330;
		font-weight: 600;
		letter-spacing: -1.5px;
	}

	.delta svg {
		margin: 0 2px 0 0;
	}

	.delta b {
		margin-right: 6px;
	}

	.vs {
		fill: #fff;
		font-size: 25px;
		font-weight: 800;
		font-style: italic;
	}

	.vs-art {
		fill: #faeeed;
		font-size: 120px;
		font-weight: 900;
		font-style: italic;
		letter-spacing: -4px;
	}

	.vs-art.outline {
		stroke: #fdf8f7;
		stroke-width: 36px;
	}

	.vote {
		position: relative;
		display: flex;
		gap: 5px;
		width: 456px;
		height: 94px;
		margin: 23px 0 0 0;
		padding: 4px;
		border-radius: 47px;
		background: #fffafa;
	}

	.bull, .bear {
		width: 224px;
		display: flex;
		align-items: center;
	}

	.bull {
		padding-left: 15px;
		gap: 24px;
		border-radius: 43px 0 0 43px;
		background: #f8dcd9;
		color: #c9502e;
		clip-path: polygon(0 0, 100% 0, calc(100% - 5px) 100%, 0 100%);
	}

	.bear {
		padding-right: 15px;
		justify-content: flex-end;
		gap: 18px;
		border-radius: 0 43px 43px 0;
		background: #d9ecdd;
		color: #58a866;
		margin-left: -5px;
		clip-path: polygon(5px 0, 100% 0, 100% 100%, 0 100%);
	}

	.vote i {
		width: 68px;
		height: 68px;
		display: flex;
		align-items: center;
		justify-content: center;
		border-radius: 50%;
		background: #fff;
	}

	.vote span {
		padding-bottom: 4px;
		font-size: 33px;
		font-weight: 400;
		line-height: 44px;
	}

	.vote small {
		display: block;
		font-size: 27px;
		line-height: 40px;
		letter-spacing: -0.5px;
	}

	.sorting {
		height: 89px;
		padding: 45px 46px 0 46px;
		display: flex;
		align-items: center;
		border-bottom: 2px solid #d9d9d9;
		font-size: 37px;
		font-weight: 400;
		line-height: 40px;
		color: #666;
	}

	.sorting strong {
		margin-right: 8px;
		color: #333;
		font-size: 41px;
		font-weight: 700;
	}

	.sorting .hot {
		margin-left: 57px;
		color: #666;
	}

	.filter {
		margin: 0 16px 0 auto;
	}

	.bottom {
		height: 171px;
		display: flex;
		flex-wrap: wrap;
		align-content: flex-start;
		background: #f7f8fb;
		color: #666;
	}

	.index {
		width: 257px;
		height: 144px;
		padding: 8px 0 0 32px;
		font-size: 39px;
	}

	.index svg {
		margin-left: 88px;
	}

	.index b {
		color: #d2423a;
		font-weight: 500;
		letter-spacing: -0.8px;
	}

	.index div b {
		font-size: 40.500px;
	}

	.index .points {
		display: block;
		margin-left: 11px;
		font-size: 47px;
		line-height: 56px;
		letter-spacing: -1.7px;
	}

	.index div {
		display: flex;
		align-items: center;
		height: 34px;
		gap: 33px;
	}

	.action {
		width: 205.500px;
		height: 144px;
		padding-top: 9px;
		display: flex;
		flex-direction: column;
		align-items: center;
		font-size: 40px;
		line-height: 67px;
	}

	.home-bar {
		width: 428px;
		height: 10px;
		margin: 0 auto;
		border-radius: 5px;
		background: #666868;
	}
</style>
